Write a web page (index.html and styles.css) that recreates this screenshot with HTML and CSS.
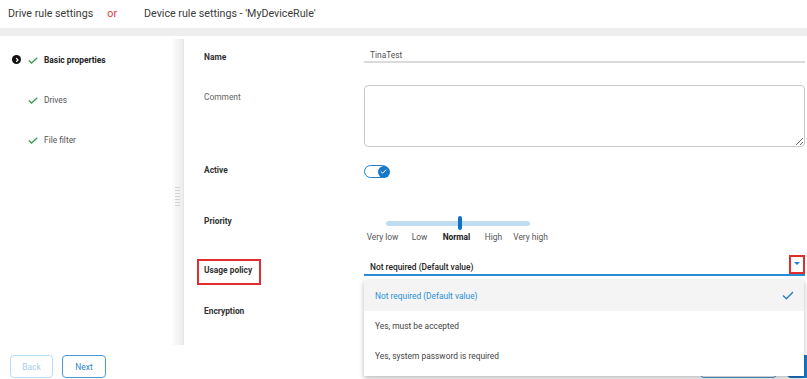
FILE: index.html
```html
<!DOCTYPE html>
<html>
<head>
<meta charset="utf-8">
<link rel="stylesheet" href="styles.css">
</head>
<body>
<header class="topbar">
  <span class="title">Drive rule settings</span>
  <span class="or">or</span>
  <span class="title">Device rule settings - 'MyDeviceRule'</span>
</header>
<div class="band"></div>
<div class="content">
  <nav class="steps">
    <div class="step current">
      <span class="bullet"><svg viewBox="0 0 8 8" width="8" height="8"><path d="M3.2 2.2 L5 4 L3.2 5.8" fill="none" stroke="#fff" stroke-width="1.2"/></svg></span>
      <svg class="check" viewBox="0 0 10 7" width="10" height="7"><path d="M0.8 3.4 L3.6 6 L9.2 0.8" fill="none" stroke="#3a9d5a" stroke-width="1.3"/></svg>
      <span class="step-text">Basic properties</span>
    </div>
    <div class="step">
      <span class="bullet empty"></span>
      <svg class="check" viewBox="0 0 10 7" width="10" height="7"><path d="M0.8 3.4 L3.6 6 L9.2 0.8" fill="none" stroke="#3a9d5a" stroke-width="1.3"/></svg>
      <span class="step-text">Drives</span>
    </div>
    <div class="step">
      <span class="bullet empty"></span>
      <svg class="check" viewBox="0 0 10 7" width="10" height="7"><path d="M0.8 3.4 L3.6 6 L9.2 0.8" fill="none" stroke="#3a9d5a" stroke-width="1.3"/></svg>
      <span class="step-text">File filter</span>
    </div>
  </nav>
  <div class="splitter"><span class="grip"></span></div>
  <div class="form">
    <div class="row row-name">
      <span class="label">Name</span>
      <div class="text-input">TinaTest</div>
    </div>
    <div class="row row-comment">
      <span class="label plain">Comment</span>
      <textarea class="textarea"></textarea>
    </div>
    <div class="row row-active">
      <span class="label">Active</span>
      <div class="toggle">
        <span class="knob"><svg viewBox="0 0 8 6" width="7" height="5"><path d="M0.8 3 L3 5 L7.2 0.8" fill="none" stroke="#fff" stroke-width="1.2"/></svg></span>
      </div>
    </div>
    <div class="row row-priority">
      <span class="label">Priority</span>
      <div class="slider">
        <div class="track-wrap">
          <div class="track"></div>
          <span class="thumb"></span>
        </div>
        <div class="ticks">
          <span>Very low</span><span>Low</span><span class="sel">Normal</span><span>High</span><span>Very high</span>
        </div>
      </div>
    </div>
    <div class="row row-usage">
      <span class="label boxed">Usage policy</span>
      <div class="select">
        <span class="select-value">Not required (Default value)</span>
        <span class="arrow-box"><span class="arrow"></span></span>
        <div class="menu">
          <div class="option selected">
            <span>Not required (Default value)</span>
            <svg viewBox="0 0 12 9" width="12" height="9"><path d="M1 4.5 L4.4 7.8 L11 1" fill="none" stroke="#2a7fc7" stroke-width="1.4"/></svg>
          </div>
          <div class="option">Yes, must be accepted</div>
          <div class="option">Yes, system password is required</div>
        </div>
      </div>
    </div>
    <div class="row row-enc">
      <span class="label">Encryption</span>
      <span></span>
    </div>
  </div>
</div>
<footer class="footer">
  <button class="btn disabled">Back</button>
  <button class="btn">Next</button>
  <span class="spacer"></span>
  <button class="btn wide" aria-label="Cancel"></button>
  <button class="btn primary" aria-label="Save"></button>
</footer>
</body>
</html>
```
FILE: styles.css
```css
* { box-sizing: border-box; }
html, body { margin: 0; padding: 0; }
body {
  width: 807px;
  height: 379px;
  overflow: hidden;
  background: #fff;
  font-family: Roboto, "Liberation Sans", sans-serif;
  color: #333;
}
.topbar {
  height: 28px;
  display: flex;
  align-items: center;
  padding-left: 8px;
  font-size: 10.7px;
  color: #3a3a3a;
  padding-bottom: 1px;
}
.or {
  color: #d93a32;
  margin: 0 27px 0 14px;
}
.band {
  height: 8px;
  background: #eeeeee;
}
.content {
  margin-top: 3px;
  height: 306px;
  display: flex;
}
.steps {
  width: 172px;
  padding: 14px 0 0 12px;
  font-size: 8.4px;
  color: #555;
}
.step {
  height: 40px;
  display: flex;
  align-items: flex-start;
  line-height: 14px;
}
.bullet {
  width: 9px;
  height: 9px;
  border-radius: 50%;
  background: #111;
  margin-top: 2px;
  margin-right: 7px;
  display: flex;
  align-items: center;
  justify-content: center;
}
.bullet.empty { background: transparent; }
.check {
  margin-top: 4px;
  margin-right: 6px;
}
.current .step-text { font-weight: 700; color: #222; }
.splitter {
  width: 12px;
  background: linear-gradient(to right, #fdfdfd, #ececec);
  border-right: 1px solid #e6e6e6;
  display: flex;
  align-items: center;
  justify-content: center;
}
.grip {
  width: 5px;
  height: 19px;
  margin-top: 8px;
  background: repeating-linear-gradient(to bottom, #d2d2d2 0 1px, transparent 1px 3px);
}
.form {
  flex: 1;
  padding: 11px 2px 0 20px;
  font-size: 8.4px;
}
.row {
  display: grid;
  grid-template-columns: 160px 1fr;
  align-items: start;
}
.label {
  line-height: 14px;
  font-weight: 700;
  color: #333;
}
.label.plain { font-weight: 400; color: #666; }
.text-input {
  line-height: 11px;
  padding-left: 6px;
  color: #555;
  border-bottom: 2px solid #dadada;
}
.row-comment { margin-top: 21px; }
.row-comment .label { padding-top: 5px; }
.textarea {
  display: block;
  width: 100%;
  height: 62px;
  border: 1px solid #c9c9c9;
  border-radius: 4px;
  resize: vertical;
  margin: 0;
}
.row-active { margin-top: 18px; }
.row-active .label { margin-top: -2px; }
.toggle {
  width: 25px;
  height: 13px;
  border: 1.5px solid #1f7dcb;
  border-radius: 7px;
  background: #fff;
  position: relative;
  display: flex;
  justify-content: flex-end;
  align-items: center;
}
.knob {
  width: 12px;
  height: 12px;
  margin-right: -1.5px;
  border-radius: 50%;
  background: #1a78c9;
  display: flex;
  align-items: center;
  justify-content: center;
}
.row-priority { margin-top: 38px; }
.row-priority .label { margin-top: -2px; }
.track-wrap {
  position: relative;
  height: 14px;
  display: flex;
  align-items: center;
  margin-left: 22px;
  width: 144px;
}
.track {
  width: 100%;
  height: 5px;
  border-radius: 3px;
  background: #c0dcf1;
}
.thumb {
  position: absolute;
  left: 72px;
  top: 0;
  width: 4px;
  height: 14px;
  border-radius: 2px;
  background: #0f74c4;
}
.ticks {
  display: flex;
  line-height: 14px;
  color: #555;
}
.ticks span {
  width: 37px;
  text-align: center;
  white-space: nowrap;
}
.ticks .sel { font-weight: 700; color: #222; }
.row-usage { margin-top: 16px; }
.row-usage .label { margin-top: 3px; }
.boxed {
  position: relative;
}
.boxed::after {
  content: "";
  position: absolute;
  left: -7px;
  top: -4px;
  width: 60px;
  height: 22px;
  border: 2px solid #e32c2c;
}
.select {
  position: relative;
  line-height: 14px;
  border-bottom: 2px solid #2a8bd6;
  padding-left: 6px;
}
.select-value { font-weight: 500; color: #222; }
.arrow-box {
  position: absolute;
  right: 0;
  top: -5px;
  width: 16px;
  height: 19px;
  border: 2px solid #e32c2c;
  display: flex;
  justify-content: center;
  padding-top: 5px;
}
.arrow {
  width: 0;
  height: 0;
  border-left: 3px solid transparent;
  border-right: 3px solid transparent;
  border-top: 3px solid #1b7fcf;
}
.menu {
  position: absolute;
  left: 0;
  top: 20px;
  width: 440px;
  background: #fff;
  box-shadow: 0 2px 5px rgba(0,0,0,0.28);
  padding-bottom: 5px;
  z-index: 10;
}
.option {
  height: 30px;
  display: flex;
  align-items: center;
  justify-content: space-between;
  padding: 0 10px 0 11px;
  color: #444;
}
.option.selected {
  background: #f4f4f4;
  color: #2b8fd8;
  height: 31px;
}
.row-enc { margin-top: 27px; }
.footer {
  display: flex;
  align-items: flex-start;
  padding: 10px 0 0 10px;
  gap: 9px;
}
.spacer { flex: 1; }
.btn {
  height: 23px;
  width: 44px;
  border: 1px solid #4a9ad6;
  border-radius: 4px;
  background: #fff;
  color: #2f86c8;
  font-family: Roboto, "Liberation Sans", sans-serif;
  font-size: 8.4px;
  padding: 0;
}
.btn.disabled { border-color: #bcdcf2; color: #a9cde9; width: 43px; }
.btn.wide { width: 77px; margin-right: 1px; }
.btn.primary { width: 60px; margin-right: -40px; background: #1a78c9; color: #fff; border-color: #1a78c9; }
```
